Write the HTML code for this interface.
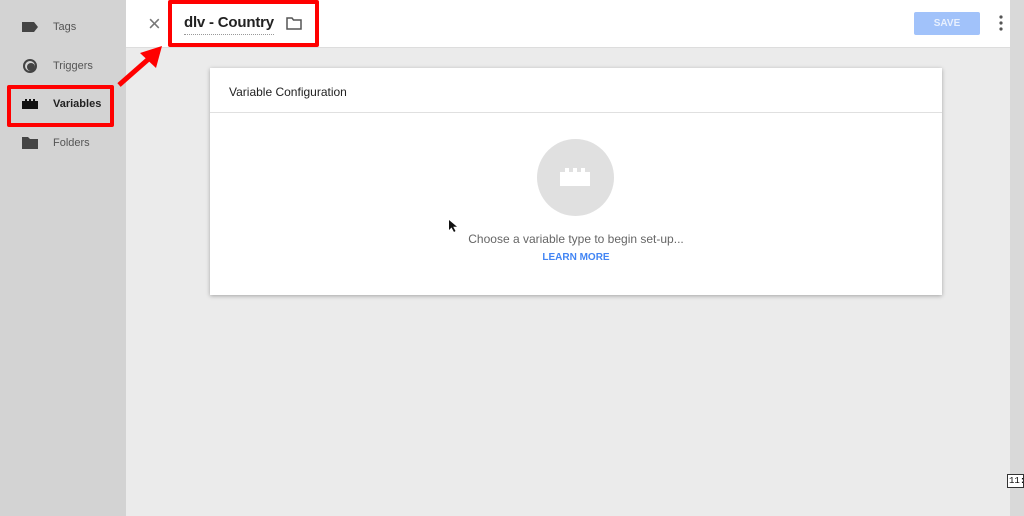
<!DOCTYPE html>
<html><head><meta charset="utf-8"><style>
*{margin:0;padding:0;box-sizing:border-box}
body{width:1024px;height:516px;overflow:hidden;background:#ebebeb;font-family:"Liberation Sans",sans-serif;position:relative}
.side{position:absolute;left:0;top:0;width:126px;height:516px;background:#d3d3d3}
.item{position:absolute;left:53px;font-size:11px;color:#555}
.ic{position:absolute;left:22px}
.header{position:absolute;left:126px;top:0;width:884px;height:48px;background:#fff;border-bottom:1px solid #ddd}
.rstrip{position:absolute;left:1010px;top:0;width:14px;height:516px;background:#d9d9d9}
.card{position:absolute;left:210px;top:68px;width:732px;height:227px;background:#fff;box-shadow:0 1px 4px rgba(0,0,0,.3)}
.redbox{position:absolute;border:4px solid #f00;border-radius:2px}
</style></head><body>
<div class="side">
 <svg class="ic" style="top:22px" width="16" height="10"><path d="M0 0H12L16 5L12 10H0Z" fill="#444"/></svg>
 <div class="item" style="top:21px">Tags</div>
 <svg class="ic" style="top:58px" width="16" height="16"><circle cx="8" cy="8" r="6" fill="none" stroke="#444" stroke-width="2"/><circle cx="9" cy="9" r="4" fill="#444"/></svg>
 <div class="item" style="top:60px">Triggers</div>
 <svg class="ic" style="top:99px" width="16" height="10"><path d="M0 2H3V0H5V2H7V0H9V2H11V0H13V2H16V10H0Z" fill="#111"/></svg>
 <div class="item" style="top:98px;color:#222;font-weight:bold">Variables</div>
 <svg class="ic" style="top:137px" width="16" height="12"><path d="M0 0H6L8 2H16V12H0Z" fill="#444"/></svg>
 <div class="item" style="top:137px">Folders</div>
</div>
<div class="redbox" style="left:7px;top:85px;width:107px;height:42px"></div>
<div class="header">
 <div style="position:absolute;left:22px;top:11px;font-size:22px;color:#777">×</div>
 <div style="position:absolute;left:58px;top:14px;font-size:15px;font-weight:bold;letter-spacing:-0.2px;color:#222;border-bottom:1px dotted #999;padding-bottom:3px">dlv - Country</div>
 <svg style="position:absolute;left:160px;top:17px" width="16" height="13"><path d="M1 1H6L7.5 3H15V12H1Z" fill="none" stroke="#555" stroke-width="1.5"/></svg>
 <div style="position:absolute;left:788px;top:12px;width:66px;height:23px;background:#a1c2fa;border-radius:2px;color:#e8f0fe;font-size:10px;font-weight:bold;text-align:center;line-height:23px">SAVE</div>
 <svg style="position:absolute;left:873px;top:15px" width="4" height="16"><circle cx="2" cy="2" r="1.6" fill="#555"/><circle cx="2" cy="8" r="1.6" fill="#555"/><circle cx="2" cy="14" r="1.6" fill="#555"/></svg>
</div>
<div class="redbox" style="left:168px;top:0;width:151px;height:47px"></div>
<svg style="position:absolute;left:110px;top:40px" width="60" height="50"><path d="M9 45L42 16" stroke="#f00" stroke-width="5"/><path d="M52 6L30 13L46 28Z" fill="#f00"/></svg>
<div class="rstrip"></div>
<div class="card">
 <div style="height:45px;border-bottom:1px solid #e0e0e0;padding:17px 0 0 19px;font-size:12px;color:#222">Variable Configuration</div>
 <div style="position:absolute;left:327px;top:71px;width:77px;height:77px;border-radius:50%;background:#e0e0e0"></div>
 <svg style="position:absolute;left:349px;top:100px" width="32" height="20"><path d="M1 4H6V0H10V4H14V0H18V4H22V0H26V4H31V18H1Z" fill="#fff"/></svg>
 <div style="position:absolute;left:0;width:732px;top:164px;text-align:center;font-size:12px;color:#666">Choose a variable type to begin set-up...</div>
 <div style="position:absolute;left:0;width:732px;top:184px;text-align:center;font-size:10px;color:#4285f4;font-weight:bold">LEARN MORE</div>
</div>
<svg style="position:absolute;left:448px;top:219px" width="10" height="14"><path d="M1 1L1 11L3.5 8.5L6 13L7.5 12L5.2 7.8H9Z" fill="#111"/></svg>
<div style="position:absolute;left:1007px;top:474px;width:17px;height:14px;background:#fff;border:1px solid #333;font-family:'Liberation Mono',monospace;font-size:9px;line-height:12px;padding-left:1px;overflow:hidden">11:</div>
</body></html>
